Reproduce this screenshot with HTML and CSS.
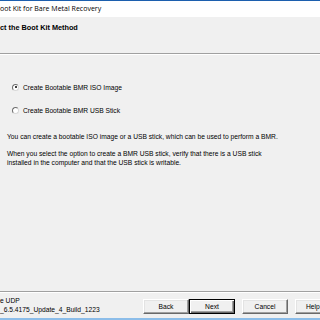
FILE: index.html
```html
<!DOCTYPE html>
<html lang="en">
<head>
  <meta charset="UTF-8" />
  <title>Boot Kit for Bare Metal Recovery</title>
  <link rel="stylesheet" href="styles.css">
</head>
<body>
  <div class="window">
    <div class="title-bar">oot Kit for Bare Metal Recovery</div>
    <div class="header">
      <h1 class="header-title">ct the Boot Kit Method</h1>
    </div>
    <div class="content">
      <div class="options">
        <label class="radio-row">
          <span class="radio checked"></span>
          <span>Create Bootable BMR ISO Image</span>
        </label>
        <label class="radio-row">
          <span class="radio"></span>
          <span>Create Bootable BMR USB Stick</span>
        </label>
      </div>
      <p class="info">You can create a bootable ISO image or a USB stick, which can be used to perform a BMR.</p>
      <p class="info">When you select the option to create a BMR USB stick, verify that there is a USB stick<br>installed in the computer and that the USB stick is writable.</p>
    </div>
    <div class="footer">
      <div class="product">
        <div>e UDP</div>
        <div>_6.5.4175_Update_4_Build_1223</div>
      </div>
      <div class="buttons">
        <div class="btn-pair">
          <button class="btn">Back</button>
          <button class="btn default">Next</button>
        </div>
        <button class="btn">Cancel</button>
        <button class="btn help">Help</button>
      </div>
    </div>
  </div>
</body>
</html>
```

FILE: styles.css
```css
:root {
  --face: #f0f0f0;
  --title-blue: #1c5fae;
  --edge-blue: #8cbde9;
  --line-dark: #a0a0a0;
  --text: #000;
}
html, body {
  margin: 0;
  padding: 0;
  width: 320px;
  height: 320px;
  overflow: hidden;
  background: var(--face);
  font-family: 'Liberation Sans', Arial, sans-serif;
  color: var(--text);
}
.window {
  display: flex;
  flex-direction: column;
  height: 320px;
  border-top: 1px solid var(--title-blue);
  border-bottom: 2px solid var(--edge-blue);
  box-sizing: border-box;
}
.title-bar {
  height: 16px;
  background: #fff;
  font-family: 'Open Sans', 'Liberation Sans', sans-serif;
  font-size: 7px;
  line-height: 15px;
  white-space: nowrap;
}
.header {
  height: 36px;
  border-bottom: 1px solid var(--line-dark);
  box-shadow: 0 1px 0 #fff;
}
.header-title {
  margin: 0;
  padding-top: 6px;
  font-size: 7.3px;
  font-weight: 700;
  line-height: 9px;
  white-space: nowrap;
}
.content {
  flex: 1;
  padding: 28px 0 0 7px;
  font-size: 6.7px;
}
.options {
  display: flex;
  flex-direction: column;
  gap: 13px;
  margin-left: 5px;
  margin-bottom: 17px;
}
.radio-row {
  display: flex;
  align-items: center;
  gap: 4px;
  height: 10px;
  white-space: nowrap;
}
.radio {
  width: 5px;
  height: 5px;
  border-radius: 50%;
  background: #fff;
  border: 1px solid #6d6d6d;
  border-right-color: #d8d8d8;
  border-bottom-color: #d8d8d8;
  display: flex;
  align-items: center;
  justify-content: center;
}
.radio.checked::after {
  content: "";
  width: 2px;
  height: 2px;
  border-radius: 50%;
  background: #000;
}
.info {
  margin: 0 0 8px 0;
  line-height: 9px;
  white-space: nowrap;
}
.footer {
  height: 27px;
  border-top: 1px solid var(--line-dark);
  box-shadow: inset 0 1px 0 #fff;
  display: flex;
  align-items: flex-start;
  padding-top: 3px;
  box-sizing: border-box;
}
.product {
  width: 143px;
  flex-shrink: 0;
  font-size: 6.7px;
  line-height: 9px;
  padding-top: 1px;
  white-space: nowrap;
}
.buttons {
  display: flex;
  gap: 7px;
  padding-top: 4px;
}
.btn-pair {
  display: flex;
}
.btn {
  width: 46px;
  height: 15px;
  flex-shrink: 0;
  margin: 0;
  padding: 0;
  background: var(--face);
  font-family: 'Liberation Sans', Arial, sans-serif;
  font-size: 6.7px;
  color: var(--text);
  border: 1px solid;
  border-color: #fff #696969 #696969 #fff;
  box-shadow: inset -1px -1px 0 #a0a0a0, inset 1px 1px 0 #e3e3e3;
}
.btn.help {
  text-align: left;
  padding-left: 10px;
}
.btn.default {
  border: 1px solid #000;
  box-shadow: inset 1px 1px 0 #fff, inset -1px -1px 0 #696969, inset -2px -2px 0 #a0a0a0;
}
```
